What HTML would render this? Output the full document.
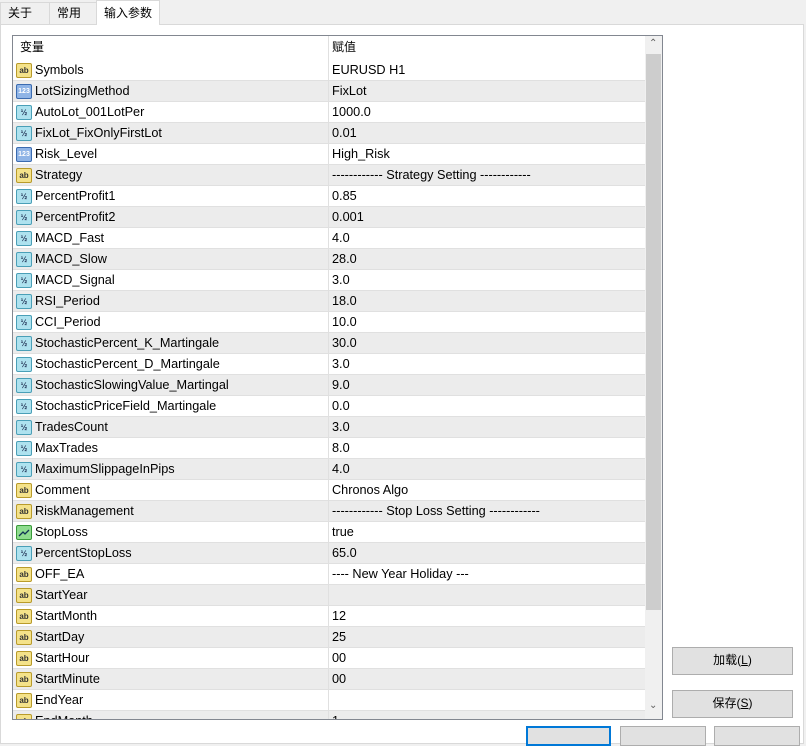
<!DOCTYPE html>
<html><head><meta charset="utf-8"><style>
*{margin:0;padding:0;box-sizing:border-box}
body{width:806px;height:731px;background:#f0f0f0;font-family:"Liberation Sans","Noto Sans CJK SC",sans-serif;font-size:12px;color:#000;position:relative;overflow:hidden}
.tab{position:absolute;top:2px;height:22px;border:1px solid #d9d9d9;border-bottom:none;background:#f0f0f0;line-height:21px;padding-left:7px}
.panel{position:absolute;left:0;top:24px;width:804px;height:720px;background:#fff;border:1px solid #d9d9d9}
.tbl{position:absolute;left:12px;top:35px;width:651px;height:685px;border:1px solid #828790;background:#fff;overflow:hidden}
.row{position:absolute;left:0;width:633px;height:21px;line-height:20px;border-bottom:1px solid #e0e0e0;font-size:12.7px}
.row.g{background:#ececec}
.c1{position:absolute;left:22px;top:0}
.c2{position:absolute;left:319px;top:0}
.div{position:absolute;left:315px;top:0;width:1px;height:685px;background:#e0e0e0}
.ic{position:absolute;left:3px;top:3px;width:16px;height:15px;border-radius:2px;font-size:8px;line-height:13px;text-align:center;font-weight:bold}
.ab{background:#f4e28a;border:1px solid #b99b2a;color:#333}
.n{background:#8fb4e6;border:1px solid #3b6bb0;color:#fff;font-size:7px}
.h{background:#aee2ef;border:1px solid #4a9fb7;color:#235;font-size:8px}
.b{background:#8fdc8f;border:1px solid #3a9a3a}
.sb{position:absolute;left:632px;top:0;width:17px;height:683px;background:#f0f0f0}
.thumb{position:absolute;left:1px;top:18px;width:15px;height:556px;background:#cdcdcd}
.btn{position:absolute;background:#e1e1e1;border:1px solid #adadad;text-align:center;line-height:25px}
</style></head><body>
<div class="panel"></div>
<div class="tab" style="left:0;width:50px">关于</div>
<div class="tab" style="left:49px;width:48px">常用</div>
<div class="tab" style="left:96px;top:0;height:25px;width:64px;background:#fff;line-height:24px">输入参数</div>
<div class="tbl">
<div class="row" style="top:0;height:23px;line-height:22px;border-bottom:none;font-size:12px"><span class="c1" style="left:7px">变量</span><span class="c2">赋值</span></div>
<div id="rows"></div>
<div class="div"></div>
<div class="sb"><div style="position:absolute;left:4px;top:2px;font-size:10px;color:#606060">&#8963;</div><div class="thumb"></div><div style="position:absolute;left:4px;top:664px;font-size:10px;color:#606060">&#8964;</div></div>
</div>
<div class="btn" style="left:672px;top:647px;width:121px;height:28px">加载(<u>L</u>)</div>
<div class="btn" style="left:672px;top:690px;width:121px;height:28px">保存(<u>S</u>)</div>
<div class="btn" style="left:526px;top:726px;width:85px;height:20px;border:2px solid #0078d7"></div>
<div class="btn" style="left:620px;top:726px;width:86px;height:20px"></div>
<div class="btn" style="left:714px;top:726px;width:86px;height:20px"></div>
<script>
var d=[["ab","Symbols","EURUSD H1"],["n","LotSizingMethod","FixLot"],["h","AutoLot_001LotPer","1000.0"],["h","FixLot_FixOnlyFirstLot","0.01"],["n","Risk_Level","High_Risk"],["ab","Strategy","------------ Strategy Setting ------------"],["h","PercentProfit1","0.85"],["h","PercentProfit2","0.001"],["h","MACD_Fast","4.0"],["h","MACD_Slow","28.0"],["h","MACD_Signal","3.0"],["h","RSI_Period","18.0"],["h","CCI_Period","10.0"],["h","StochasticPercent_K_Martingale","30.0"],["h","StochasticPercent_D_Martingale","3.0"],["h","StochasticSlowingValue_Martingal","9.0"],["h","StochasticPriceField_Martingale","0.0"],["h","TradesCount","3.0"],["h","MaxTrades","8.0"],["h","MaximumSlippageInPips","4.0"],["ab","Comment","Chronos Algo"],["ab","RiskManagement","------------ Stop Loss Setting ------------"],["b","StopLoss","true"],["h","PercentStopLoss","65.0"],["ab","OFF_EA","---- New Year Holiday ---"],["ab","StartYear",""],["ab","StartMonth","12"],["ab","StartDay","25"],["ab","StartHour","00"],["ab","StartMinute","00"],["ab","EndYear",""],["ab","EndMonth","1"]];
var t={ab:"ab",n:"123",h:"½",b:"<svg width='14' height='13'><path d='M2 10 L6 6 L8 8 L12 4' stroke='#135' fill='none' stroke-width='1.3'/></svg>"};
var s="";d.forEach(function(r,i){s+='<div class="row'+(i%2?' g':'')+'" style="top:'+(24+i*21)+'px"><span class="ic '+r[0]+'">'+t[r[0]]+'</span><span class="c1">'+r[1]+'</span><span class="c2">'+r[2]+'</span></div>'});
document.getElementById("rows").innerHTML=s;
</script>
</body></html>
